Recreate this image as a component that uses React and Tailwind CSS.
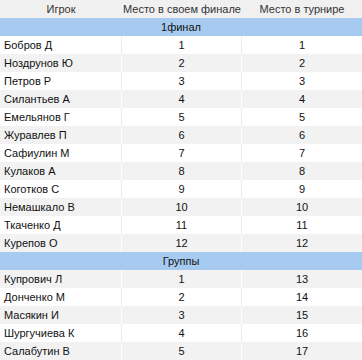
import React from 'react'

const finalRows = [
  ['Бобров Д', 1, 1],
  ['Ноздрунов Ю', 2, 2],
  ['Петров Р', 3, 3],
  ['Силантьев А', 4, 4],
  ['Емельянов Г', 5, 5],
  ['Журавлев П', 6, 6],
  ['Сафиулин М', 7, 7],
  ['Кулаков А', 8, 8],
  ['Коготков С', 9, 9],
  ['Немашкало В', 10, 10],
  ['Ткаченко Д', 11, 11],
  ['Курепов О', 12, 12],
]

const groupRows = [
  ['Купрович Л', 1, 13],
  ['Донченко М', 2, 14],
  ['Масякин И', 3, 15],
  ['Шургучиева К', 4, 16],
  ['Салабутин В', 5, 17],
]

// bands count as rows, so the striping runs on across both sections
const body = [
  { band: '1финал' },
  ...finalRows.map((r) => ({ row: r })),
  { band: 'Группы' },
  ...groupRows.map((r) => ({ row: r })),
]

function Row({ row, shaded }) {
  const [name, place, total] = row
  const bg = shaded ? 'bg-[#f2f2f2]' : 'bg-white'
  const line = shaded ? 'border-white' : 'border-[#ebebeb]'
  return (
    <div className={`flex h-[18px] items-center ${bg}`}>
      <div className={`w-[122px] h-full flex items-center pl-[4px] border-r ${line}`}>{name}</div>
      <div className={`w-[120px] h-full flex items-center justify-center border-r ${line}`}>{place}</div>
      <div className="w-[120px] h-full flex items-center justify-center">{total}</div>
    </div>
  )
}

export default function App() {
  return (
    <div className="w-[362px] h-[360px] overflow-hidden bg-white text-[11px] leading-none text-[#111] font-['Liberation_Sans',Arial,sans-serif]">
      <div className="flex h-[18px] items-center bg-[#f0f0f0] text-[#333] whitespace-nowrap">
        <div className="w-[122px] flex justify-center">Игрок</div>
        <div className="w-[120px] flex justify-center">Место в своем финале</div>
        <div className="w-[120px] flex justify-center">Место в турнире</div>
      </div>
      {body.map((item, i) =>
        item.band ? (
          <div key={i} className="h-[18px] flex items-center justify-center bg-[#a7caf0]">
            {item.band}
          </div>
        ) : (
          <Row key={i} row={item.row} shaded={i % 2 === 0} />
        )
      )}
    </div>
  )
}
